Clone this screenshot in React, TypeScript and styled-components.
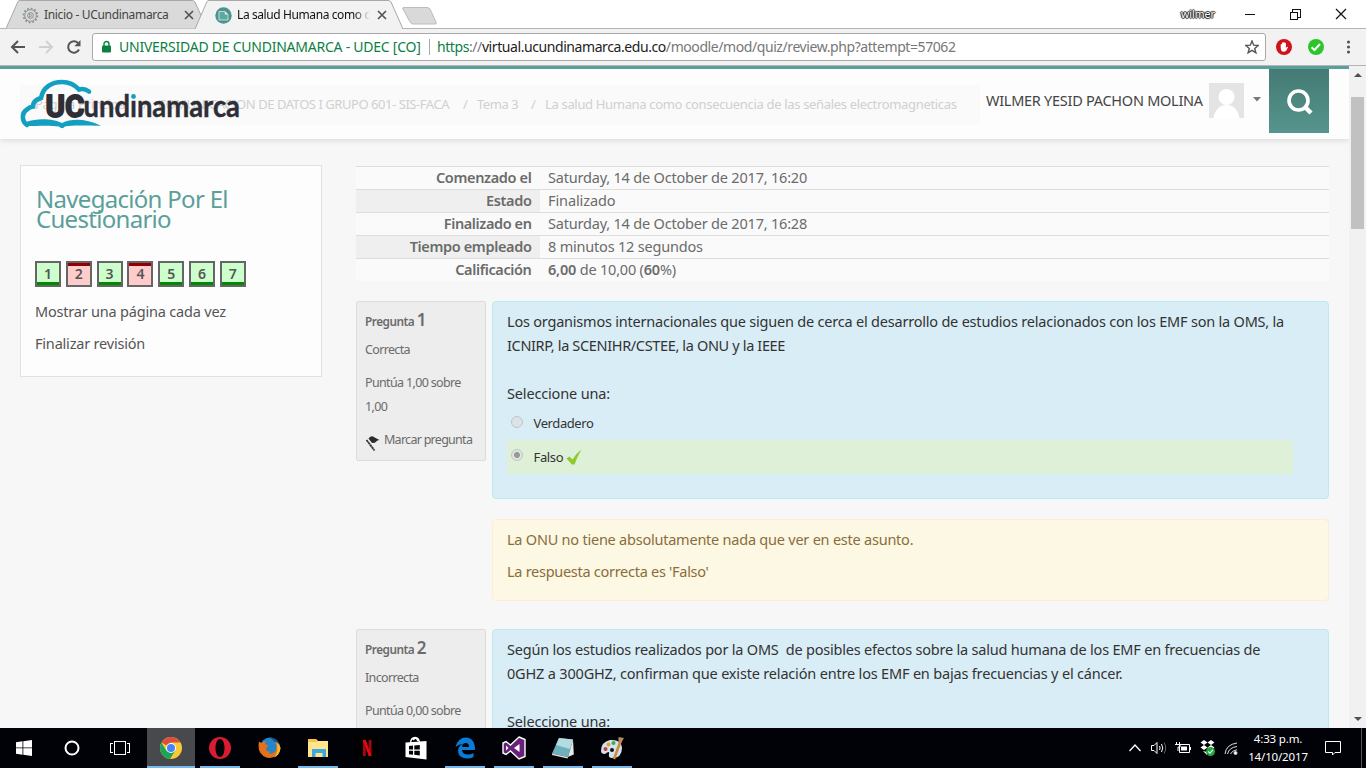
import React from 'react';
import styled, { createGlobalStyle, css } from 'styled-components';

const Global = createGlobalStyle`
  * { box-sizing: border-box; }
  html, body { margin: 0; padding: 0; overflow: hidden; }
  body { font-family: "Noto Sans", "Open Sans", sans-serif; font-size: 14.5px; color: #6b6b6b; }
  p, h2 { margin: 0; font-weight: 400; }
`;

const spaced = css<{ $ls?: number }>`letter-spacing: ${(p) => p.$ls ?? 0}px;`;

const Desktop = styled.div`
  width: 1366px; height: 768px; overflow: hidden;
  display: flex; flex-direction: column; background: #fff;
`;

/* ---------- browser chrome ---------- */
const TabStrip = styled.div`
  height: 28px; flex: none; display: flex; background: #fff;
  justify-content: space-between; padding-left: 5px;
`;
const Tabs = styled.div`display: flex;`;
const Tab = styled.div<{ $active?: boolean }>`
  position: relative; z-index: ${(p) => (p.$active ? 2 : 1)};
  width: ${(p) => (p.$active ? 210 : 203)}px; height: 29px; margin-right: -14px;
  display: flex; align-items: center; padding: ${(p) => (p.$active ? '1px 0 0 21px' : '1px 0 0 17px')}; gap: 6px;
  color: ${(p) => (p.$active ? '#111' : '#444')}; font-size: 12px; white-space: nowrap;
`;
const TabShape = styled.svg`position: absolute; left: 0; top: 0; z-index: -1;`;
const TabTitle = styled.span<{ $ls?: number; $fade?: boolean }>`
  ${spaced} width: 133px; overflow: hidden; line-height: 18px; margin-left: -1px; margin-right: 1px;
  ${(p) => p.$fade && 'mask-image: linear-gradient(90deg, #000 88%, transparent 100%);'}
`;
const NewTab = styled.svg`margin-left: 11px;`;
const WindowButtons = styled.div`
  display: flex; align-items: center; height: 27px; padding-right: 18px;
`;
const UserName = styled.span`
  font-size: 10.5px; color: #fff; width: 34px; margin-right: 29px; letter-spacing: 0; line-height: 14px;
  text-shadow: 0 0 1px #111, 1px 0 1px #222, -1px 0 1px #222, 0 1px 1px #222, 0 -1px 1px #222;
`;
const Toolbar = styled.div`
  height: 38px; flex: none; display: flex; align-items: center; background: #f2f2f2;
  border-top: 1px solid #b6b4b6; border-bottom: 1px solid #b6b4b6; padding: 0 10px;
`;
const NavIcons = styled.div`display: flex; gap: 12px; width: 82px;`;
const AddressBar = styled.div`
  width: 1174px; height: 28px; background: #fff; border: 1px solid #a9a9a9; border-radius: 3px;
  display: flex; align-items: center; padding: 0 6px 0 8px; font-size: 14px; white-space: nowrap;
`;
const Owner = styled.span<{ $ls?: number }>`
  ${spaced} color: #0b8043; width: 311px; margin-left: 6px; border-right: 1px solid #aaa; line-height: 16px;
`;
const Url = styled.span<{ $ls?: number }>`
  ${spaced} color: #777; margin-left: 7px; flex: 1; line-height: 20px; padding-bottom: 1px;
  b { font-weight: 400; color: #222; }
  i { font-style: normal; color: #0b8043; }
`;
const Extensions = styled.div`display: flex; align-items: center; margin-left: 10px; gap: 16px;`;

/* ---------- page ---------- */
const Viewport = styled.div`height: 662px; flex: none; display: flex;`;
const Page = styled.div`
  width: 1349px; height: 662px; overflow: hidden; background: #f7f7f7; border-top: 3px solid #5a9f99;
`;
const Header = styled.header`
  position: relative; height: 70px; background: #fdfdfd; box-shadow: 0 1px 6px rgba(0,0,0,.14);
  display: flex; padding: 0 20px;
`;
const Crumbs = styled.nav`
  width: 960px; height: 40px; margin-top: 16px; background: #fafafa; padding: 0 0 2px 15px;
  display: flex; align-items: center; color: #d0d0d0; font-size: 13px; white-space: nowrap; line-height: 20px;
`;
const Crumb = styled.span<{ $ls?: number; $w: number }>`${spaced} width: ${(p) => p.$w}px; flex: none;`;
const Logo = styled.svg`position: absolute; left: 20px; top: 10px;`;
const User = styled.div`
  flex: 1; display: flex; align-items: center; height: 63px; padding-left: 6px; color: #444;
`;
const FullName = styled.span<{ $ls?: number }>`${spaced} width: 223px; white-space: nowrap; line-height: 21px;`;
const Caret = styled.svg`margin: -3px 0 0 9px;`;
const SearchButton = styled.div`
  width: 60px; height: 64px; background: linear-gradient(#447a74, #55958d);
  display: flex; align-items: center; justify-content: center; padding: 2px 0 0 2px;
`;
const Columns = styled.div`display: flex; padding: 27px 20px 0; gap: 34px; align-items: flex-start;`;
const Aside = styled.aside`
  width: 302px; height: 212px; margin-top: -1px; background: #fdfdfd; border: 1px solid #e1e1e1; padding: 23px 14px 0;
`;
const AsideTitle = styled.h2<{ $ls?: number }>`
  ${spaced} font-size: 24px; line-height: 20px; color: #5a9f99; margin-bottom: 32px; padding-left: 1px; white-space: nowrap;
`;
const Squares = styled.div`display: flex; gap: 4.8px; margin-bottom: 12px; height: 26px;`;
const Square = styled.span<{ $ok: boolean }>`
  width: 26px; height: 26px; border: 2px solid #666; font-weight: 600; color: #555; font-size: 14px;
  display: flex; align-items: center; justify-content: center; flex: none; padding-bottom: 1px;
  background: ${(p) => (p.$ok
    ? 'linear-gradient(#cfc 0 19px, #008a00 19px)'
    : 'linear-gradient(#8f0000 0 3px, #fcc 3px)')};
`;
const AsideLink = styled.p<{ $ls?: number }>`${spaced} line-height: 24px; margin-bottom: 8px; color: #555;`;

const Main = styled.main`width: 973px;`;
const Summary = styled.div`display: flex; flex-direction: column; height: 135px;`;
const SummaryRow = styled.div<{ $shade: boolean }>`
  display: flex; height: 23px; border-top: 1px solid #ddd; background: #fafafa; line-height: 20px;
  & > :first-child { background: ${(p) => (p.$shade ? '#efefef' : 'transparent')}; }
`;
const SummaryLabel = styled.b<{ $ls?: number }>`${spaced} width: 184px; padding-right: 8.500px; text-align: right; font-weight: 600;`;
const SummaryValue = styled.span<{ $ls?: number }>`${spaced} padding-left: 8px; b { font-weight: 600; }`;

const Question = styled.section`display: flex; gap: 6px; align-items: flex-start; margin-bottom: 28px;`;
const Info = styled.div`
  width: 130px; height: 160px; border: 1px solid #dcdcdc; border-radius: 2px; background: #ededed;
  padding: 7px 0 0 8px; font-size: 12.5px; line-height: 24px;
`;
const InfoTitle = styled.div<{ $ls?: number }>`
  ${spaced} font-size: 11.8px; font-weight: 600; line-height: 24px; margin-bottom: 5px; margin-top: -1px;
  big { font-size: 17px; letter-spacing: 0; }
`;
const InfoLine = styled.p<{ $ls?: number }>`${spaced} margin-bottom: 9px; white-space: pre-line; display: flex; align-items: center;`;
const Body = styled.div`width: 837px; display: flex; flex-direction: column; gap: 20px;`;
const Formulation = styled.div`
  height: 198px; border: 1px solid #bce8f1; border-radius: 4px; background: #d9edf6; color: #333;
  padding: 7px 14px 0; line-height: 24px;
`;
const Line = styled.p<{ $ls?: number }>`${spaced} white-space: pre;`;
const Gap = styled.div`height: 24px;`;
const Answers = styled.div`padding-top: 1px;`;
const Answer = styled.div<{ $right?: boolean }>`
  display: flex; align-items: center; font-size: 13px; width: 786px; height: 34px;
  background: ${(p) => (p.$right ? '#dff0d8' : 'transparent')}; padding-left: 4px;
`;
const Radio = styled.span<{ $on?: boolean }>`
  width: 12px; height: 12px; border-radius: 50%; border: 1px solid #bfc5c7; margin: ${(p) => (p.$on ? -4 : -3)}px 10.5px 0 0;
  background: ${(p) => (p.$on ? 'radial-gradient(circle, #999 0 2.6px, #dfe6dd 3.4px)' : '#dce3e6')};
`;
const AnswerText = styled.span<{ $ls?: number }>`${spaced}`;
const Feedback = styled.div`
  height: 82px; border: 1px solid #fbeed5; border-radius: 4px; background: #fcf8e3; color: #8a6d3b;
  padding: 7px 14px 0; line-height: 24px; & > p { margin-bottom: 8px; }
`;

const Scrollbar = styled.div`
  width: 17px; background: #f1f1f1; display: flex; flex-direction: column; align-items: center; justify-content: space-between;
`;
const Thumb = styled.div`width: 13px; height: 132px; background: #c1c1c1; margin: 14px 0 auto;`;

/* ---------- taskbar ---------- */
const Taskbar = styled.footer`height: 40px; flex: none; display: flex; background: #010207; color: #fff;`;
const SystemKeys = styled.div`display: flex; width: 147px;`;
const SysKey = styled.div`width: 48px; display: flex; align-items: center; justify-content: center;`;
const TaskButton = styled.div<{ $state?: 'open' | 'active' }>`
  width: 48px; margin-right: 1px; display: flex; align-items: center; justify-content: center;
  background: ${(p) => (p.$state === 'active' ? '#48494c' : 'transparent')};
  ${(p) => p.$state && css`
    background-image: linear-gradient(#76b9ed, #76b9ed); background-repeat: no-repeat;
    background-position: 50% 100%; background-size: ${p.$state === 'active' ? '48px' : '40px'} 2px;
  `}
`;
const Tray = styled.div`margin-left: auto; display: flex; align-items: center; width: 239px;`;
const TrayIcons = styled.div`display: flex; gap: 6.5px; width: 121px; height: 40px; align-items: center; flex: none;`;
const Clock = styled.div<{ $ls?: number }>`
  ${spaced} width: 60px; text-align: center; font-size: 11.5px; line-height: 18px; white-space: nowrap;
  margin-right: 16px; padding-bottom: 1px; flex: none;
`;
const ShowDesktop = styled.div`height: 40px; width: 5px; border-left: 1px solid #55565a; margin-left: 19px;`;

const CloseX = () => (
  <svg width="10" height="10" viewBox="0 0 10 10"><path d="M1 1l8 8M9 1L1 9" stroke="#555" strokeWidth="1.700" /></svg>
);

const Gear = () => (
  <svg width="17" height="17" viewBox="0 0 17 17" fill="none" stroke="#87918f">
    <circle cx="8.500" cy="8.500" r="7" strokeWidth="1.600" strokeDasharray="1.800 1.865" />
    <circle cx="8.500" cy="8.500" r="5.800" />
    <circle cx="8.500" cy="8.500" r="2.900" />
    <path d="M7.500 6.700v3.600l2.600-1.800z" strokeWidth=".8" />
  </svg>
);

const QuizBadge = () => (
  <svg width="17" height="17" viewBox="0 0 17 17">
    <circle cx="8.500" cy="8.500" r="8.200" fill="#4b958e" />
    <path d="M4 4.500h6l3 3v5.500H4z" fill="#5fa8a1" stroke="#c8e2df" strokeWidth=".9" />
    <path d="M9.800 4.300v3.200h3.200z" fill="#e8f4f2" />
  </svg>
);

const LogoMark = () => (
  <Logo width="222" height="52" viewBox="0 0 222 52">
    <path d="M7 46C1.500 42 1.500 34 7 30.500C9 28.500 10 28 13 27.500C13 22 17 20.500 21 19C23 8 32 3 42 3C49 3 55 6 59 10.500C64 9 67 11 69 12.500" fill="none" stroke="#139fc1" strokeWidth="4.600" strokeLinecap="round" />
    <path d="M6 43C18 38.500 34 40 42 44C52 39 66 39.500 81 46.700C66 46.700 52 46 45 47.500Q42 51 39 47.500C30 46 16 47 8 47z" fill="#139fc1" />
    <g fill="#2e2e36" stroke="#2e2e36" strokeLinejoin="round">
      <text x="25.500" y="37.500" fontSize="32" fontWeight="700" fontFamily="Roboto, sans-serif" strokeWidth="1.800" textLength="39" lengthAdjust="spacingAndGlyphs">UC</text>
      <text x="63.500" y="37.500" fontSize="31" fontWeight="700" fontFamily="Lato, sans-serif" strokeWidth=".4" textLength="156.500" lengthAdjust="spacingAndGlyphs">undınamarca</text>
    </g>
    <circle cx="113.500" cy="17.500" r="2.400" fill="#139fc1" />
  </Logo>
);

const Avatar = () => (
  <svg width="35" height="35" viewBox="0 0 35 35">
    <rect width="35" height="35" fill="#e4e4e4" />
    <circle cx="17.500" cy="14" r="8" fill="#fff" />
    <path d="M4.500 35C6 26 11 22 17.500 22S29 26 30.500 35z" fill="#fff" />
  </svg>
);

const FlagIcon = styled.svg`margin: 5px 3px 0 0; flex: none;`;
const Flag = () => (
  <FlagIcon width="16" height="18" viewBox="0 0 16 18">
    <path d="M1.500 6l8 10.500" stroke="#333" strokeWidth="1.800" strokeDasharray="2.500 .4" />
    <path d="M3.500 4.500Q6 1.500 8 2.500T14.500 6Q12 6 11.300 7.500T7 9z" fill="#2b2b2b" />
  </FlagIcon>
);

const TickIcon = styled.svg`margin-left: 3px;`;
const Tick = () => (
  <TickIcon width="16" height="16" viewBox="0 0 16 16">
    <path d="M.5 9.500L3.500 7.500L6.500 10.500Q10 4.500 15.500.5Q11.500 7 8.500 15.500H6z" fill="#8fc92e" />
  </TickIcon>
);

type RowData = { label: string; value: React.ReactNode; l: number; v: number };
const rows: RowData[] = [
  { label: 'Comenzado el', value: 'Saturday, 14 de October de 2017, 16:20', l: -0.35, v: -0.2 },
  { label: 'Estado', value: 'Finalizado', l: -0.37, v: -0.1 },
  { label: 'Finalizado en', value: 'Saturday, 14 de October de 2017, 16:28', l: -0.4, v: -0.2 },
  { label: 'Tiempo empleado', value: '8 minutos 12 segundos', l: -0.35, v: -0.2 },
  { label: 'Calificación', value: <><b>6,00</b> de 10,00 (<b>60</b>%)</>, l: -0.37, v: -0.2 },
];

export default function App() {
  return (
    <Desktop>
      <Global />
      <TabStrip>
        <Tabs>
          <Tab>
            <TabShape width="203" height="29"><path d="M1 28.500L13 1.500Q14 .5 15 .5H187Q189 .5 190 2L202 28.500" fill="#dadada" stroke="#a8a8a8" /></TabShape>
            <Gear /><TabTitle $ls={-0.33}>Inicio - UCundinamarca</TabTitle><CloseX />
          </Tab>
          <Tab $active>
            <TabShape width="212" height="30"><path d="M1 29L13 1.500Q14 .5 15 .5H194Q196 .5 197 2L209 29" fill="#f2f2f2" stroke="#a8a8a8" /></TabShape>
            <QuizBadge /><TabTitle $fade $ls={-0.4}>La salud Humana como consecuencia</TabTitle><CloseX />
          </Tab>
          <NewTab width="40" height="28" viewBox="0 0 40 28">
            <path d="M3 7.500H26Q28 7.500 29 9L35 22Q36 24 34 24H12Q10 24 9 22L2 9Q1 7.500 3 7.500z" fill="#d9d9d9" stroke="#bcbcbc" />
          </NewTab>
        </Tabs>
        <WindowButtons>
          <UserName>wilmer</UserName>
          <svg width="104" height="12" viewBox="0 0 104 12" fill="none" stroke="#111" shapeRendering="crispEdges">
            <path d="M1 6.500h10" />
            <path d="M46 4v7.500h7.500V4H46zM48 4V1.500h8.500V9H54" />
            <path d="M92 1l10 10M102 1L92 11" shapeRendering="auto" strokeWidth="1.200" />
          </svg>
        </WindowButtons>
      </TabStrip>

      <Toolbar>
        <NavIcons>
          <svg width="16" height="16" viewBox="0 0 16 16" fill="none" stroke="#555" strokeWidth="2"><path d="M15 8H2.500M8 2L2 8l6 6" /></svg>
          <svg width="16" height="16" viewBox="0 0 16 16" fill="none" stroke="#d0d0d0" strokeWidth="2"><path d="M1 8h12.500M8 2l6 6-6 6" /></svg>
          <svg width="16" height="16" viewBox="0 0 16 16" fill="none" stroke="#555" strokeWidth="2"><path d="M13 10.500A5.700 5.700 0 1 1 12 4" /><path d="M14.500 1v6.200H8.300z" fill="#555" stroke="none" /></svg>
        </NavIcons>
        <AddressBar>
          <svg width="12" height="14" viewBox="0 0 12 14"><rect x="1" y="5.500" width="9" height="7" rx="1" fill="#0b8043" /><path d="M3 6V4a2.500 2.500 0 0 1 5 0v2" fill="none" stroke="#0b8043" strokeWidth="1.400" /></svg>
          <Owner $ls={-0.24}>UNIVERSIDAD DE CUNDINAMARCA - UDEC [CO]</Owner>
          <Url $ls={-0.42}><i>https</i>://<b>virtual.ucundinamarca.edu.co</b>/moodle/mod/quiz/review.php?attempt=57062</Url>
          <svg width="14" height="14" viewBox="0 0 14 14"><path d="M7 1l1.700 4.200 4.500.3-3.500 2.900 1.200 4.400L7 10.400l-3.900 2.400 1.200-4.400L.8 5.500l4.500-.3z" fill="none" stroke="#555" strokeWidth="1.400" /></svg>
        </AddressBar>
        <Extensions>
          <svg width="16" height="16" viewBox="0 0 16 16"><circle cx="8" cy="8" r="8" fill="#d0121b" /><path d="M4.700 8V5.500q.8-.8 1.200 0V4q.8-.8 1.300 0V3.300q.8-.7 1.300 0V4q.9-.7 1.400 0v5l1.200-1.300q1-.2.9.6L10 12q-2.500 1.600-4.500 0-.8-1.500-.8-4z" fill="#fff" /></svg>
          <svg width="16" height="16" viewBox="0 0 16 16"><circle cx="8" cy="8" r="8" fill="#2bc52c" /><path d="M3.500 8.300l3 2.700 5.500-6" fill="none" stroke="#fff" strokeWidth="2" /></svg>
          <svg width="16" height="16" viewBox="0 0 16 16" fill="#555"><circle cx="8.500" cy="3" r="1.600" /><circle cx="8.500" cy="8" r="1.600" /><circle cx="8.500" cy="13" r="1.600" /></svg>
        </Extensions>
      </Toolbar>

      <Viewport>
        <Page>
          <Header>
            <Crumbs>
              <Crumb $w={108} $ls={-0.3}>Página Principal</Crumb>
              <Crumb $w={15}>/</Crumb>
              <Crumb $w={305} $ls={-0.45}>COMUNICACION DE DATOS I GRUPO 601- SIS-FACA</Crumb>
              <Crumb $w={14}>/</Crumb>
              <Crumb $w={54} $ls={-0.45}>Tema 3</Crumb>
              <Crumb $w={14}>/</Crumb>
              <Crumb $w={412} $ls={-0.33}>La salud Humana como consecuencia de las señales electromagneticas</Crumb>
            </Crumbs>
            <LogoMark />
            <User>
              <FullName $ls={-0.27}>WILMER YESID PACHON MOLINA</FullName>
              <Avatar />
              <Caret width="8" height="5" viewBox="0 0 8 5"><path d="M0 0h8L4 4.500z" fill="#777" /></Caret>
            </User>
            <SearchButton>
              <svg width="28" height="28" viewBox="0 0 28 28" fill="none" stroke="#fff"><circle cx="12.500" cy="12.500" r="9.500" strokeWidth="3.600" /><path d="M19 19l6 6" strokeWidth="4.500" /></svg>
            </SearchButton>
          </Header>

          <Columns>
            <Aside>
              <AsideTitle $ls={-0.7}>Navegación Por El<br />Cuestionario</AsideTitle>
              <Squares>
                {[true, false, true, false, true, true, true].map((ok, i) => <Square key={i} $ok={ok}>{i + 1}</Square>)}
              </Squares>
              <AsideLink $ls={-0.2}>Mostrar una página cada vez</AsideLink>
              <AsideLink $ls={-0.2}>Finalizar revisión</AsideLink>
            </Aside>

            <Main>
              <Summary>
                {rows.map((r, i) => (
                  <SummaryRow key={r.label} $shade={i % 2 === 1}>
                    <SummaryLabel $ls={r.l}>{r.label}</SummaryLabel>
                    <SummaryValue $ls={r.v}>{r.value}</SummaryValue>
                  </SummaryRow>
                ))}
              </Summary>

              <Question>
                <Info>
                  <InfoTitle $ls={-0.5}>Pregunta <big>1</big></InfoTitle>
                  <InfoLine $ls={-0.65}>Correcta</InfoLine>
                  <InfoLine $ls={-0.65}>{'Puntúa 1,00 sobre\n1,00'}</InfoLine>
                  <InfoLine $ls={-0.72}><Flag />Marcar pregunta</InfoLine>
                </Info>
                <Body>
                  <Formulation>
                    <Line $ls={-0.21}>Los organismos internacionales que siguen de cerca el desarrollo de estudios relacionados con los EMF son la OMS, la</Line>
                    <Line $ls={-0.35}>ICNIRP, la SCENIHR/CSTEE, la ONU y la IEEE</Line>
                    <Gap />
                    <Line $ls={-0.16}>Seleccione una:</Line>
                    <Answers>
                      <Answer><Radio /><AnswerText $ls={-0.4}>Verdadero</AnswerText></Answer>
                      <Answer $right><Radio $on /><AnswerText $ls={-0.35}>Falso</AnswerText><Tick /></Answer>
                    </Answers>
                  </Formulation>
                  <Feedback>
                    <Line $ls={-0.23}>La ONU no tiene absolutamente nada que ver en este asunto.</Line>
                    <Line $ls={-0.28}>La respuesta correcta es 'Falso'</Line>
                  </Feedback>
                </Body>
              </Question>

              <Question>
                <Info>
                  <InfoTitle $ls={-0.5}>Pregunta <big>2</big></InfoTitle>
                  <InfoLine $ls={-0.65}>Incorrecta</InfoLine>
                  <InfoLine $ls={-0.65}>Puntúa 0,00 sobre</InfoLine>
                </Info>
                <Body>
                  <Formulation>
                    <Line $ls={-0.205}>Según los estudios realizados por la OMS  de posibles efectos sobre la salud humana de los EMF en frecuencias de</Line>
                    <Line $ls={-0.18}>0GHZ a 300GHZ, confirman que existe relación entre los EMF en bajas frecuencias y el cáncer.</Line>
                    <Gap />
                    <Line $ls={-0.16}>Seleccione una:</Line>
                  </Formulation>
                </Body>
              </Question>
            </Main>
          </Columns>
        </Page>
        <Scrollbar>
          <svg width="8" height="17" viewBox="0 0 8 17"><path d="M0 11h8L4 7z" fill="#505050" /></svg>
          <Thumb />
          <svg width="8" height="17" viewBox="0 0 8 17"><path d="M0 6h8l-4 4z" fill="#505050" /></svg>
        </Scrollbar>
      </Viewport>

      <Taskbar>
        <SystemKeys>
          <SysKey><svg width="16" height="16" viewBox="0 0 16 16" fill="#fff"><path d="M0 2.200L6.500 1.300V7.500H0zM7.300 1.200L16 0V7.500H7.300zM0 8.300H6.500V14.700L0 13.800zM7.300 8.300H16V16L7.300 14.800z" /></svg></SysKey>
          <SysKey><svg width="16" height="16" viewBox="0 0 16 16"><circle cx="8" cy="8" r="6.500" fill="none" stroke="#fff" strokeWidth="2" /></svg></SysKey>
          <SysKey><svg width="20" height="14" viewBox="0 0 20 14" fill="none" stroke="#fff" shapeRendering="crispEdges"><path d="M4.500.5h11v13h-11zM3 2.500H.5v9H3M17 2.500h2.500v9H17" /></svg></SysKey>
        </SystemKeys>
        <TaskButton $state="active">
          <svg width="22" height="22" viewBox="0 0 22 22"><circle cx="11" cy="11" r="11" fill="#fbc935" /><path d="M11 11L1.500 5.500A11 11 0 0 1 20.500 5.500H11z" fill="#d9503f" /><path d="M1.500 5.500A11 11 0 0 0 10 22L15.300 13.500 11 11 6.300 13.700z" fill="#1fa35c" /><circle cx="11" cy="11" r="5" fill="#fff" /><circle cx="11" cy="11" r="4" fill="#4285f4" /></svg>
        </TaskButton>
        <TaskButton $state="open">
          <svg width="22" height="22" viewBox="0 0 22 22"><path fillRule="evenodd" d="M11 0a11 11 0 1 1 0 22A11 11 0 0 1 11 0zM11 2C8 2 6.500 6.500 6.500 11S8 20 11 20s4.500-4.500 4.500-9S14 2 11 2z" fill="#d81c31" /></svg>
        </TaskButton>
        <TaskButton>
          <svg width="23" height="22" viewBox="0 0 23 22"><circle cx="12" cy="10.500" r="10" fill="#2386c8" /><path d="M12 .5A10 10 0 0 1 22 9L17 5z" fill="#1a4f91" /><path d="M1 4.500L3.500 6Q5 4 7.500 4.500L7 7 10.500 8.500 8 11Q8 15 12 14.500 10 17.500 14 16.500 18.500 15 18.500 9L17 5Q21 6 22.500 11A11 11 0 0 1 1 13Q0 8 1 4.500z" fill="#e5701c" /><path d="M18.500 5Q22 8 22.500 11Q22 18 16 20.500Q21 15 18.500 5z" fill="#f9b73a" /></svg>
        </TaskButton>
        <TaskButton $state="open">
          <svg width="22" height="20" viewBox="0 0 22 20"><path d="M1 1h8l2 2h10v16H1z" fill="#ffe48d" /><path d="M1 1h8l1 3H1z" fill="#f4c648" /><path d="M5 11h14v8h-3.500v-4h-7v4H5z" fill="#39a9e0" /></svg>
        </TaskButton>
        <TaskButton>
          <svg width="24" height="24" viewBox="0 0 24 24"><rect width="24" height="24" fill="#000" /><path d="M8 4h2.800v16H8zM13.700 4h2.800v16h-2.800z" fill="#a5060f" /><path d="M8 4h2.800l5.700 16h-2.800z" fill="#e50914" /></svg>
        </TaskButton>
        <TaskButton>
          <svg width="22" height="24" viewBox="0 0 22 24"><path d="M.5 6.500L21.500 5v18.500L.5 21z" fill="#fff" /><path d="M5.500 7Q6 1.500 10 1.500T14.500 7M8 4Q11 0 13 5" fill="none" stroke="#fff" strokeWidth="1.400" /><path d="M4 10l4-.4v4H4zM9.300 9.500l5.500-.6v4.700H9.300zM4 14.700h4v4l-4-.4zM9.300 14.700h5.500v4.700l-5.500-.6z" fill="#010207" /></svg>
        </TaskButton>
        <TaskButton $state="open">
          <svg width="21" height="22" viewBox="0 0 21 22"><path d="M.5 10Q3 .5 11 .5Q20 1 20 13H7Q7.500 17.500 13 17.500Q16 17.500 18.500 16V20Q16 21.500 11.500 21.500Q3 21 3 13.500Q3.500 8.500 8 7Q4 7 .5 10zM7 10h7Q14 6 10.700 6Q7.500 6 7 10z" fill="#0b7bd8" /></svg>
        </TaskButton>
        <TaskButton $state="open">
          <svg width="24" height="24" viewBox="0 0 24 24"><path d="M17 1l6 2.500v17L17 23l-8.500-8L4 18.500 1 17V7l3-1.500L8.500 9z" fill="#68217a" stroke="#fff" strokeWidth="1.400" /><path d="M17.500 8v8l-5.500-4zM4 9.500v5L6.500 12z" fill="#fff" /></svg>
        </TaskButton>
        <TaskButton $state="open">
          <svg width="24" height="24" viewBox="0 0 24 24"><path d="M8 2l14 1.500L17 21 1 17.500z" fill="#6fb0bd" /><path d="M8 2l14 1.500L19 13 5 9z" fill="#b3dbe1" /><path d="M22 3.500l.8 15L17 21z" fill="#e8e8e8" /><path d="M1 17.500L17 21l-.5 1.500L1 19z" fill="#ddd" /></svg>
        </TaskButton>
        <TaskButton $state="open">
          <svg width="25" height="24" viewBox="0 0 25 24"><path d="M1 15Q1 6 10 4Q21 3 22 12Q22 22 12 22Q8 22 9 18T5 18Q1 18 1 15z" fill="#cfe3f1" /><circle cx="5.500" cy="13" r="2" fill="#d8382c" /><circle cx="8.500" cy="8.500" r="2" fill="#e8a22a" /><circle cx="13.500" cy="7" r="2" fill="#4aa93c" /><circle cx="12" cy="14" r="2" fill="#111" /><path d="M21 4L14 23" stroke="#d08a3a" strokeWidth="2.600" /><path d="M18.500 1l5.500 1-3 5h-2.500z" fill="#b98a5e" /></svg>
        </TaskButton>
        <Tray>
          <TrayIcons>
            <svg width="16" height="16" viewBox="0 0 16 16" fill="none" stroke="#fff" strokeWidth="1.300"><path d="M2.500 11l5.500-6 5.500 6" /></svg>
            <svg width="18" height="16" viewBox="0 0 18 16" fill="none" stroke="#fff"><path d="M1.500 5.500H4l3-3v11l-3-3H1.500zM9.500 6q1.200 2 0 4M11.500 4q2.500 4 0 8" /><path d="M14 2.500q3.500 5.500 0 11" stroke="#666" /></svg>
            <svg width="18" height="16" viewBox="0 0 18 16" fill="none" stroke="#fff"><path d="M5.500 4.500h10v8h-10zM16.500 7v3M2.500 2v3M5.500 2v2M1 4.500h5v2.500H4v4" /><path d="M7 6.500h6v4H7z" fill="#fff" stroke="none" /></svg>
            <svg width="18" height="18" viewBox="0 0 18 18"><path d="M5 1l3.500 2.500L5 6 1.500 3.500zM12 1l3.500 2.500L12 6 8.500 3.500zM5 6l3.500 2.500L5 11 1.500 8.500zM12 6l3.500 2.500L12 11 8.500 8.500zM4 12l4 1v3z" fill="#fff" /><circle cx="11.500" cy="12.500" r="4.500" fill="#21a93b" /><path d="M9.300 12.500l1.700 1.600 2.800-3.200" fill="none" stroke="#fff" strokeWidth="1.200" /></svg>
            <svg width="16" height="16" viewBox="0 0 16 16" fill="none" stroke="#ddd"><path d="M2 14Q3 4.500 14 3M4.500 14Q6 7.500 14 6.500M7.500 14Q9 10.500 14 9.800" /><circle cx="12.500" cy="13" r="1.500" fill="#fff" /></svg>
          </TrayIcons>
          <Clock $ls={-0.15}>4:33 p.m.<br />14/10/2017</Clock>
          <svg width="18" height="18" viewBox="0 0 18 18" fill="none" stroke="#fff"><path d="M1.500 2.500h15v11H11L8.500 16v-2.500h-7z" /></svg>
          <ShowDesktop />
        </Tray>
      </Taskbar>
    </Desktop>
  );
}
